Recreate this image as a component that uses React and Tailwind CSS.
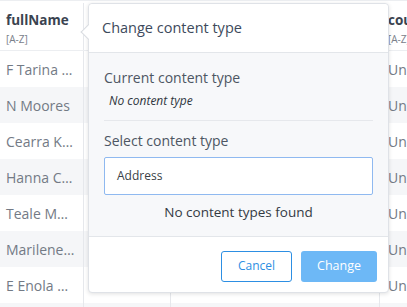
import React from "react";

const rows = [
  "F Tarina …",
  "N Moores",
  "Cearra K…",
  "Hanna C…",
  "Teale M…",
  "Marilene…",
  "E Enola …",
  "",
];

export default function App() {
  return (
    <div
      className="relative w-[407px] h-[307px] overflow-hidden bg-white"
      style={{ fontFamily: '"Open Sans", "Noto Sans", sans-serif' }}
    >
      {/* table */}
      <div className="flex flex-col">
        <div className="flex h-[51px] border-t border-b border-[#eceef1] bg-white pt-[2px]">
          <div className="w-[84px] shrink-0 border-r border-[#e6e8ec] px-[6px] pt-[11px] leading-none">
            <div className="text-[13.5px] font-bold text-[#3a4350]">fullName</div>
            <div className="text-[10px] text-[#7a808a] mt-[6px]">[A-Z]</div>
          </div>
          <div className="w-[87px] shrink-0 border-r border-[#e6e8ec]"></div>
          <div className="w-[209px] shrink-0 border-r border-[#e6e8ec]"></div>
          <div className="flex-1 min-w-0 px-[8px] pt-[11px] leading-none whitespace-nowrap">
            <div className="text-[13.5px] font-bold text-[#3a4350]">country</div>
            <div className="text-[10px] text-[#7a808a] mt-[6px]">[A-Z]</div>
          </div>
        </div>
        {rows.map((r, i) => (
          <div
            key={i}
            className={`flex h-[36px] shrink-0 items-center text-[14px] text-[#737a85] ${
              i % 2 === 1 ? "bg-[#f5f6f8]" : "bg-white"
            }`}
          >
            <div className="w-[84px] shrink-0 h-full flex items-center border-r border-[#e6e8ec] px-[6px] whitespace-nowrap overflow-hidden">
              {r}
            </div>
            <div className="w-[87px] shrink-0 h-full border-r border-[#e6e8ec]"></div>
            <div className="w-[209px] shrink-0 h-full border-r border-[#e6e8ec]"></div>
            <div className="flex-1 min-w-0 h-full flex items-center px-[8px] whitespace-nowrap">
              {r ? "United" : ""}
            </div>
          </div>
        ))}
      </div>

      {/* popover */}
      <div className="absolute left-[88px] top-[3px] w-[301px] h-[290px] bg-white border border-[#dfe2e7] rounded-[4px] shadow-[0_1px_4px_rgba(0,0,0,0.12)] flex flex-col">
        {/* arrow */}
        <div className="absolute left-[-6px] top-[22px] w-[12px] h-[12px] bg-white border-l border-b border-[#d8dbe0] rotate-45"></div>
        <div className="relative h-[49px] flex items-center px-[13px] border-b border-[#e3e6ea] text-[14.5px] text-[#3d4a5c] rounded-t-[4px] bg-white">
          Change content type
        </div>
        <div className="flex-1 bg-[#f7f8fa] px-[15px] pt-[16px] border-b border-[#e3e6ea]">
          <div className="text-[14px] text-[#4d5663] leading-[18px]">Current content type</div>
          <div className="text-[12px] italic font-medium text-[#2f3640] mt-[7px] pl-[5px] leading-[14px]">No content type</div>
          <div className="border-t border-[#e6e8ec] mt-[12px]"></div>
          <div className="text-[14px] text-[#4d5663] leading-[18px] mt-[11px]">Select content type</div>
          <div className="mt-[7px] h-[38px] border border-[#8fb9f0] rounded-[2px] bg-white flex items-center px-[12px] text-[12px] text-[#3a3f47]">
            Address
          </div>
          <div className="text-center text-[13.5px] font-medium text-[#343a43] leading-[18px] mt-[8px]">
            No content types found
          </div>
        </div>
        <div className="h-[55px] flex items-center justify-end gap-[9px] px-[11px] pt-[3px]">
          <button className="w-[71px] h-[31px] border border-[#2d8fe3] rounded-[3px] text-[12px] text-[#2d8fe3] bg-white">
            Cancel
          </button>
          <button className="w-[76px] h-[31px] rounded-[3px] text-[12.5px] text-white bg-[#6db8f6]">
            Change
          </button>
        </div>
      </div>
    </div>
  );
}
